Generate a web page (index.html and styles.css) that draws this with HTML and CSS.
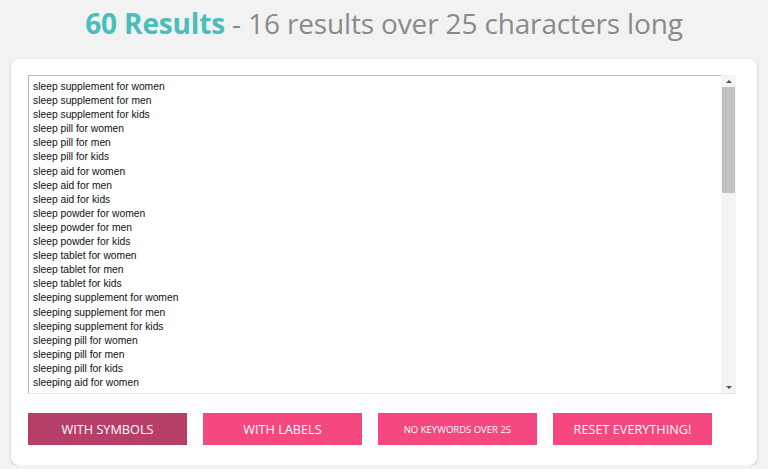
FILE: index.html
```html
<!DOCTYPE html>
<html lang="en">
<head>
    <meta charset="UTF-8">
    <title>Keyword Results</title>
    <link rel="stylesheet" href="styles.css">
</head>
<body>
    <h1 class="summary"><span class="count">60 Results</span> - 16 results over 25 characters long</h1>

    <div class="panel">
        <div class="results-box">
            <div class="results" id="results"></div>
            <div class="scrollbar">
                <div class="sb-btn up"></div>
                <div class="sb-track"><div class="sb-thumb"></div></div>
                <div class="sb-btn down"></div>
            </div>
        </div>
        <div class="actions">
            <button class="btn active">With Symbols</button>
            <button class="btn">With Labels</button>
            <button class="btn small">No keywords over 25</button>
            <button class="btn">Reset Everything!</button>
        </div>
    </div>

    <script>
        // build keyword list
        const bases = ['sleep', 'sleeping'];
        const kinds = ['supplement', 'pill', 'aid', 'powder', 'tablet'];
        const who = ['women', 'men', 'kids'];
        const lines = [];
        bases.forEach(b => {
            kinds.forEach(k => {
                who.forEach(w => lines.push(b + ' ' + k + ' for ' + w));
            });
        });
        // only the rows that fit in the box
        const visible = lines.slice(0, 22);
        document.getElementById('results').innerHTML = visible.map(l => `<div>${l}</div>`).join('');
    </script>
</body>
</html>
```

FILE: styles.css
```css
* {
    margin: 0;
    padding: 0;
    box-sizing: border-box;
}

body {
    background: #f2f2f2;
    font-family: 'Open Sans', Arial, sans-serif;
    padding: 4px 11px 0;
}

/* header */
.summary {
    text-align: center;
    font-size: 28px;
    font-weight: 400;
    color: #8a8a8a;
    height: 55px;
    line-height: 38px;
    letter-spacing: -0.15px;
}

.count {
    color: #49bebb;
    font-weight: 700;
}

/* main panel */
.panel {
    background: #fff;
    border-radius: 8px;
    box-shadow: 0 1px 3px rgba(0,0,0,0.18);
    padding: 16px 21px 20px 17px;
    height: 406px;
}

/* results list */
.results-box {
    display: flex;
    width: 708px;
    height: 319px;
    border: 1px solid #b8b8b8;
    border-right: none;
    border-bottom-color: #e6e6e6;
}

.results {
    flex: 1;
    overflow: hidden;
    padding: 4px 4px 0;
    font-family: 'Liberation Sans', Arial, sans-serif;
    font-size: 10.3px;
    line-height: 14.1px;
    color: #111;
}

/* fake scrollbar */
.scrollbar {
    width: 15px;
    display: flex;
    flex-direction: column;
    background: #f4f4f4;
    margin-top: -1px;
}

.sb-btn {
    height: 12px;
    display: flex;
    justify-content: center;
    align-items: center;
}

.sb-btn::after {
    content: '';
    border-left: 3px solid transparent;
    border-right: 3px solid transparent;
}

.sb-btn.up::after {
    border-bottom: 3px solid #505050;
}

.sb-btn.down::after {
    border-top: 3px solid #505050;
}

.sb-track {
    flex: 1;
    padding: 0 1px;
}

.sb-thumb {
    height: 106px;
    background: #c1c1c1;
}

.actions {
    display: flex;
    gap: 16px;
    margin-top: 19px;
}

.btn {
    width: 159px;
    height: 32px;
    border: none;
    background: #f5487f;
    color: #fff;
    font-family: 'Open Sans', Arial, sans-serif;
    font-size: 12.7px;
    text-transform: uppercase;
    cursor: pointer;
}

.btn.active {
    background: #b53f69;
}

.btn.small {
    font-size: 9.5px;
}
```
